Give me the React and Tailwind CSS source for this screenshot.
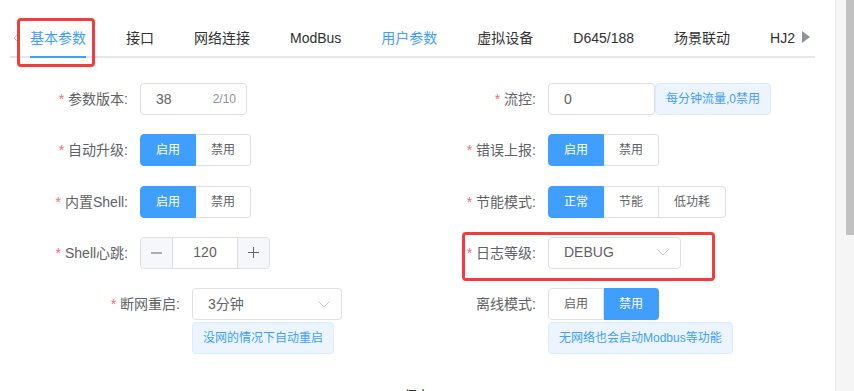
const TABS = ['基本参数', '接口', '网络连接', 'ModBus', '用户参数', '虚拟设备', 'D645/188', '场景联动', 'HJ2']

function Label({ text, req = true, w = 'w-[140px]' }) {
  return (
    <div className={`${w} shrink-0 pr-3 text-right text-[14px] leading-8 text-[#606266]`}>
      {req && <span className="mr-1 text-[#f56c6c]">*</span>}
      {text}
    </div>
  )
}

function Radios({ items, active }) {
  return (
    <div className="flex h-8">
      {items.map((it, i) => (
        <div
          key={it}
          className={`flex h-8 items-center px-[15px] text-[12px] border-y border-r
            ${i === 0 ? 'border-l rounded-l' : ''} ${i === items.length - 1 ? 'rounded-r' : ''}
            ${i === active ? 'bg-[#409eff] border-[#409eff] text-white' : 'bg-white border-[#dcdfe6] text-[#606266]'}`}
        >
          {it}
        </div>
      ))}
    </div>
  )
}

function Chevron() {
  return (
    <svg width="12" height="7" viewBox="0 0 12 7" fill="none">
      <path d="M0.5 0.5L6 6L11.5 0.5" stroke="#c0c4cc" strokeWidth="1" />
    </svg>
  )
}

function Select({ value, w, pr }) {
  return (
    <div className={`${w} h-8 flex items-center justify-between rounded border border-[#dcdfe6] pl-[15px] ${pr} text-[14px] text-[#606266]`}>
      <span>{value}</span>
      <Chevron />
    </div>
  )
}

function Tip({ children }) {
  return (
    <div className="mt-0.5 inline-flex h-8 items-center rounded border border-[#d9ecff] bg-[#ecf5ff] px-[10px] text-[12px] text-[#409eff]">
      {children}
    </div>
  )
}

export default function App() {
  return (
    <div className="relative flex h-[391px] w-[854px] overflow-hidden bg-white font-['Liberation_Sans','Noto_Sans_CJK_SC',sans-serif]">
      <div className="flex-1">

        {/* Tabs */}
        <div className="relative ml-[10px] mt-[18px] h-10 w-[805px] px-5 shadow-[inset_0_-2px_0_#e4e7ed]">
          <div className="absolute left-[3px] top-[16px]">
            <svg width="5" height="8" viewBox="0 0 5 8" fill="none">
              <path d="M4.5 0.5L1 4L4.5 7.5" stroke="#c0c4cc" strokeWidth="1" />
            </svg>
          </div>
          <div className="flex h-10 overflow-hidden">
            {TABS.map((t, i) => (
              <div key={t} className={`flex h-10 shrink-0 ${i === 0 ? 'pr-5' : 'px-5'}`}>
                <span
                  className={`h-10 text-[14px] leading-10 whitespace-nowrap
                    ${i === 0 ? 'text-[#409eff] shadow-[inset_0_-2px_0_#409eff]' : i === 4 ? 'text-[#409eff]' : 'text-[#303133]'}`}
                >
                  {t}
                </span>
              </div>
            ))}
          </div>
          <div className="absolute right-[5px] top-[13px]">
            <svg width="8" height="12" viewBox="0 0 8 12">
              <path d="M0 0L8 6L0 12Z" fill="#909399" />
            </svg>
          </div>
        </div>

        {/* Form */}
        <div className="mt-[25px] flex">
          <div className="flex w-[427px] shrink-0 flex-col gap-[19.25px]">
            <div className="flex h-8 items-center">
              <Label text="参数版本:" />
              <div className="flex h-8 w-[107px] items-center justify-between rounded border border-[#dcdfe6] pl-[15px] pr-[10px]">
                <span className="text-[14px] text-[#606266]">38</span>
                <span className="text-[12px] text-[#909399]">2/10</span>
              </div>
            </div>
            <div className="flex h-8 items-center">
              <Label text="自动升级:" />
              <Radios items={['启用', '禁用']} active={0} />
            </div>
            <div className="flex h-8 items-center">
              <Label text="内置Shell:" />
              <Radios items={['启用', '禁用']} active={0} />
            </div>
            <div className="flex h-8 items-center">
              <Label text="Shell心跳:" />
              <div className="flex h-8 w-[130px] rounded border border-[#dcdfe6] text-[14px] text-[#606266]">
                <div className="flex w-8 items-center justify-center rounded-l bg-[#f5f7fa] border-r border-[#dcdfe6]">
                  <svg width="11" height="2" viewBox="0 0 11 2"><path d="M0 1H11" stroke="#606266" strokeWidth="1" /></svg>
                </div>
                <div className="flex flex-1 items-center justify-center">120</div>
                <div className="flex w-8 items-center justify-center rounded-r bg-[#f5f7fa] border-l border-[#dcdfe6]">
                  <svg width="11" height="11" viewBox="0 0 11 11"><path d="M0 5.5H11M5.5 0V11" stroke="#606266" strokeWidth="1" /></svg>
                </div>
              </div>
            </div>
            <div>
              <div className="flex h-8 items-center">
                <Label text="断网重启:" w="w-[192px]" />
                <Select value="3分钟" w="w-[150px]" pr="pr-[11px]" />
              </div>
              <div className="pl-[192px]">
                <Tip>没网的情况下自动重启</Tip>
              </div>
            </div>
          </div>

          <div className="flex flex-1 flex-col gap-[19.25px]">
            <div className="flex h-8 items-center">
              <Label text="流控:" w="w-[121px]" />
              <div className="flex h-8 w-[107px] items-center rounded border border-[#dcdfe6] pl-[15px] text-[14px] text-[#606266]">0</div>
              <div className="flex h-8 items-center rounded border border-[#d9ecff] bg-[#ecf5ff] px-[10px] text-[12px] text-[#409eff]">
                每分钟流量,0禁用
              </div>
            </div>
            <div className="flex h-8 items-center">
              <Label text="错误上报:" w="w-[121px]" />
              <Radios items={['启用', '禁用']} active={0} />
            </div>
            <div className="flex h-8 items-center">
              <Label text="节能模式:" w="w-[121px]" />
              <Radios items={['正常', '节能', '低功耗']} active={0} />
            </div>
            <div className="flex h-8 items-center">
              <Label text="日志等级:" w="w-[121px]" />
              <Select value="DEBUG" w="w-[133px]" pr="pr-[11px]" />
            </div>
            <div>
              <div className="flex h-8 items-center">
                <Label text="离线模式:" req={false} w="w-[121px]" />
                <Radios items={['启用', '禁用']} active={1} />
              </div>
              <div className="pl-[121px]">
                <Tip>无网络也会启动Modbus等功能</Tip>
              </div>
            </div>
          </div>
        </div>

        <div className="mt-[32px] text-center text-[14px] leading-5 text-[#303133]">保存</div>
      </div>

      {/* scrollbar */}
      <div className="flex w-[19px] shrink-0 border-l border-[#ececec] bg-[#f5f5f5]">
        <div className="ml-[10px] h-[235px] flex-1 bg-[#c1c1c1]" />
      </div>

      {/* highlight boxes */}
      <div className="pointer-events-none absolute left-[17px] top-[18px] h-[49px] w-[78px] rounded-[4px] border-[3px] border-[#f23d3d]" />
      <div className="pointer-events-none absolute left-[462px] top-[232px] h-[49px] w-[253px] rounded-[4px] border-[3px] border-[#f23d3d]" />
    </div>
  )
}
